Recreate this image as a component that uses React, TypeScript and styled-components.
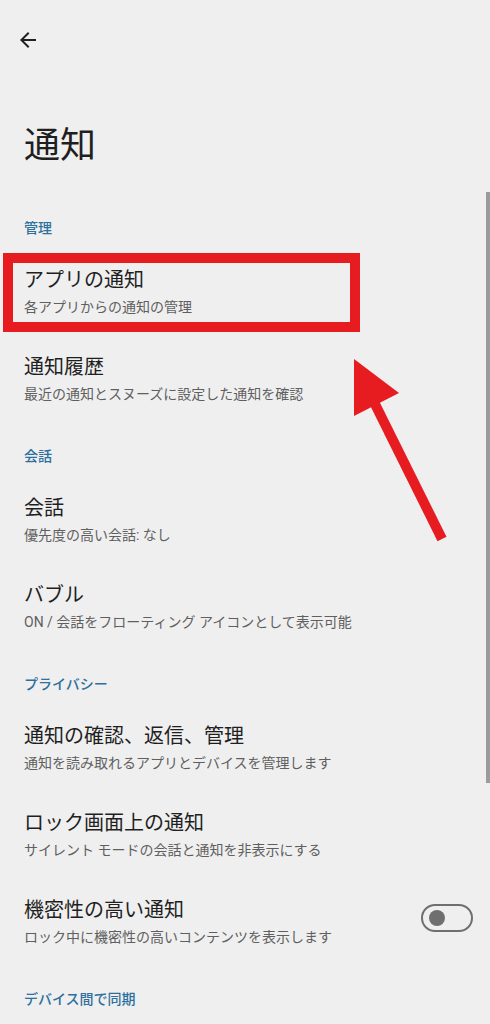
import React from 'react'
import styled, { createGlobalStyle } from 'styled-components'

const Colors = {
  BG: '#efefef',
  TEXT: '#1f1f1f',
  SUB: '#5f5f5f',
  ACCENT: '#2e6f9e',
  RED: '#e61c20',
  TRACK: '#6f6f6f',
  SCROLL: '#9b9b9b',
}

const GlobalStyle = createGlobalStyle`
  html, body {
    margin: 0;
    padding: 0;
    background: ${Colors.BG};
    overflow: hidden;
  }
  body {
    font-family: Roboto, "Noto Sans CJK JP", "Noto Sans", sans-serif;
    color: ${Colors.TEXT};
  }
`

const Page = styled.main`
  position: relative;
  height: 1024px;
  overflow: hidden;
  background: ${Colors.BG};
`

const Toolbar = styled.header`
  display: flex;
  align-items: center;
  height: 80px;
  padding-left: 16px;
`

const BackButton = styled.button`
  display: flex;
  padding: 0;
  border: none;
  background: none;
  color: ${Colors.TEXT};
`

const PageTitle = styled.h1`
  margin: 44px 0 26px;
  padding: 0 24px;
  font-size: 36px;
  line-height: 44px;
  font-weight: 400;
`

const Section = styled.section`
  display: flex;
  flex-direction: column;
`

const SectionHeader = styled.h2`
  margin: 0 0 10px;
  padding: 24px 24px 0;
  font-size: 14px;
  line-height: 20px;
  font-weight: 500;
  color: ${Colors.ACCENT};
`

const Row = styled.div`
  position: relative;
  display: flex;
  align-items: center;
  gap: 16px;
  padding: 18px 17px 18px 24px;
`

const RowText = styled.div`
  flex: 1;
  display: flex;
  flex-direction: column;
  gap: 3px;
`

const RowTitle = styled.div`
  font-size: 20px;
  line-height: 28px;
  color: ${Colors.TEXT};
`

const RowSummary = styled.div`
  font-size: 14px;
  line-height: 20px;
  color: ${Colors.SUB};
`

const Switch = styled.div`
  display: flex;
  align-items: center;
  box-sizing: border-box;
  width: 52px;
  height: 28px;
  margin-top: -8px;
  padding-left: 6px;
  border: 2px solid ${Colors.TRACK};
  border-radius: 14px;

  &::before {
    content: '';
    width: 16px;
    height: 16px;
    border-radius: 50%;
    background: ${Colors.TRACK};
  }
`

// annotation drawn over the screenshot
const Highlight = styled.div`
  position: absolute;
  top: 5px;
  left: 3px;
  width: 357px;
  height: 79px;
  box-sizing: border-box;
  border: 10px solid ${Colors.RED};
  pointer-events: none;
`

const Pointer = styled.svg`
  position: absolute;
  top: 350px;
  left: 345px;
  pointer-events: none;
`

const Scrollbar = styled.div`
  position: absolute;
  top: 192px;
  right: 0;
  width: 4px;
  height: 591px;
  background: ${Colors.SCROLL};
`

type Item = {
  title: string
  summary: string
  highlighted?: boolean
  toggle?: boolean
}

const sections: { header: string; items: Item[] }[] = [
  {
    header: '管理',
    items: [
      { title: 'アプリの通知', summary: '各アプリからの通知の管理', highlighted: true },
      { title: '通知履歴', summary: '最近の通知とスヌーズに設定した通知を確認' },
    ],
  },
  {
    header: '会話',
    items: [
      { title: '会話', summary: '優先度の高い会話: なし' },
      { title: 'バブル', summary: 'ON / 会話をフローティング アイコンとして表示可能' },
    ],
  },
  {
    header: 'プライバシー',
    items: [
      { title: '通知の確認、返信、管理', summary: '通知を読み取れるアプリとデバイスを管理します' },
      { title: 'ロック画面上の通知', summary: 'サイレント モードの会話と通知を非表示にする' },
      { title: '機密性の高い通知', summary: 'ロック中に機密性の高いコンテンツを表示します', toggle: true },
    ],
  },
  {
    header: 'デバイス間で同期',
    items: [],
  },
]

const ArrowBack = () => (
  <svg width='24' height='24' viewBox='0 0 24 24' fill='currentColor'>
    <path d='M20 11H7.83l5.59-5.59L12 4l-8 8 8 8 1.41-1.41L7.83 13H20v-2z' />
  </svg>
)

export default function App() {
  return (
    <>
      <GlobalStyle />
      <Page>
        <Toolbar>
          <BackButton aria-label='戻る'>
            <ArrowBack />
          </BackButton>
        </Toolbar>
        <PageTitle>通知</PageTitle>
        {sections.map((section) => (
          <Section key={section.header}>
            <SectionHeader>{section.header}</SectionHeader>
            {section.items.map((item) => (
              <Row key={item.title}>
                <RowText>
                  <RowTitle>{item.title}</RowTitle>
                  <RowSummary>{item.summary}</RowSummary>
                </RowText>
                {item.toggle && <Switch />}
                {item.highlighted && <Highlight />}
              </Row>
            ))}
          </Section>
        ))}
        <Pointer width='110' height='200' viewBox='345 350 110 200'>
          <polygon points='354,359 354,416 399,393' fill={Colors.RED} />
          <line x1='372' y1='398' x2='442' y2='539' stroke={Colors.RED} strokeWidth='10' />
        </Pointer>
        <Scrollbar />
      </Page>
    </>
  )
}
